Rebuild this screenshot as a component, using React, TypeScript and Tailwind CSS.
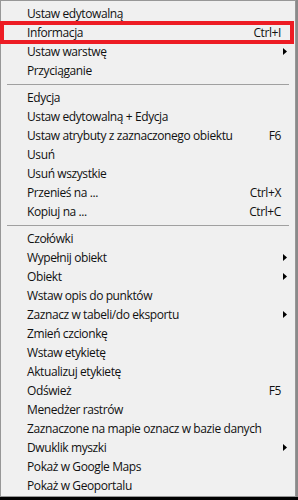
import React from "react";

type Item = { label: string; shortcut?: string; submenu?: boolean; highlight?: boolean };
type Entry = Item | "sep";

const entries: Entry[] = [
  { label: "Ustaw edytowalną" },
  { label: "Informacja", shortcut: "Ctrl+I", highlight: true },
  { label: "Ustaw warstwę", submenu: true },
  { label: "Przyciąganie" },
  "sep",
  { label: "Edycja" },
  { label: "Ustaw edytowalną + Edycja" },
  { label: "Ustaw atrybuty z zaznaczonego obiektu", shortcut: "F6" },
  { label: "Usuń" },
  { label: "Usuń wszystkie" },
  { label: "Przenieś na ...", shortcut: "Ctrl+X" },
  { label: "Kopiuj na ...", shortcut: "Ctrl+C" },
  "sep",
  { label: "Czołówki" },
  { label: "Wypełnij obiekt", submenu: true },
  { label: "Obiekt", submenu: true },
  { label: "Wstaw opis do punktów" },
  { label: "Zaznacz w tabeli/do eksportu", submenu: true },
  { label: "Zmień czcionkę" },
  { label: "Wstaw etykietę" },
  { label: "Aktualizuj etykietę" },
  { label: "Odśwież", shortcut: "F5" },
  { label: "Menedżer rastrów" },
  { label: "Zaznaczone na mapie oznacz w bazie danych" },
  { label: "Dwuklik myszki", submenu: true },
  { label: "Pokaż w Google Maps" },
  { label: "Pokaż w Geoportalu" },
];

function Arrow() {
  return (
    <svg width="4" height="7" viewBox="0 0 4 7" className="absolute right-[8px] top-[6px]">
      <path d="M0 0 L4 3.5 L0 7 Z" fill="#000" />
    </svg>
  );
}

function Row({ item }: { item: Item }) {
  return (
    <div className="relative h-[19px] flex items-center pl-[26px] pr-[14px]">
      <span className="flex-1 whitespace-nowrap">{item.label}</span>
      {item.shortcut && <span className="whitespace-nowrap">{item.shortcut}</span>}
      {item.submenu && <Arrow />}
      {item.highlight && (
        <div className="absolute left-[-1px] right-[1px] top-[-2px] bottom-[-2px] border-[4px] border-[#ed1c24]" />
      )}
    </div>
  );
}

export default function App() {
  return (
    <div className="w-[298px] h-[500px] bg-[#8a8a8a] flex flex-col overflow-hidden">
      <div
        className="w-[296px] h-[497px] bg-[#f0f0f0] border border-[#979797] pt-[3px] text-[12px] text-[#111] leading-none tracking-[-0.4px]"
        style={{ fontFamily: '"Open Sans", "Noto Sans", sans-serif' }}
      >
        {entries.map((e, i) =>
          e === "sep" ? (
            <div key={i} className="h-[8px] flex items-center px-[6px]">
              <div className="h-px w-full bg-[#a0a0a0]" />
            </div>
          ) : (
            <Row key={i} item={e} />
          )
        )}
      </div>
      <div className="flex-1 bg-black" />
    </div>
  );
}
